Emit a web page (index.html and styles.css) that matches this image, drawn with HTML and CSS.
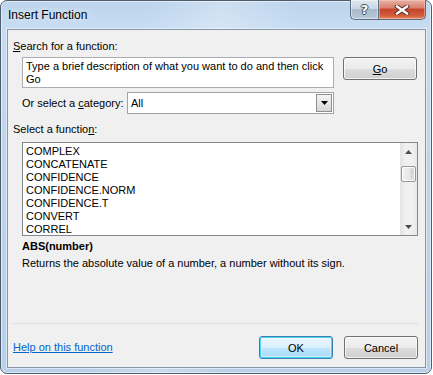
FILE: index.html
```html
<!DOCTYPE html>
<html>
<head>
<meta charset="utf-8">
<title>Insert Function</title>
<link rel="stylesheet" href="styles.css">
</head>
<body>
<div class="window">
  <div class="titlebar">
    <span class="title">Insert Function</span>
    <div class="caption-buttons">
      <div class="cap-btn cap-help"><span class="qmark">?</span></div>
      <div class="cap-btn cap-close">
        <svg width="16" height="10" viewBox="0 0 16 10">
          <path d="M3 1.5 L13 8.5 M13 1.5 L3 8.5" stroke="#5a2a22" stroke-width="4.2" stroke-linecap="square" fill="none"/>
          <path d="M3 1.5 L13 8.5 M13 1.5 L3 8.5" stroke="#ffffff" stroke-width="2.4" stroke-linecap="square" fill="none"/>
        </svg>
      </div>
    </div>
  </div>
  <div class="client">
    <div class="label label-search"><u>S</u>earch for a function:</div>
    <div class="search-row">
      <div class="textbox">Type a brief description of what you want to do and then click<br>Go</div>
      <button class="btn btn-go"><u>G</u>o</button>
    </div>
    <div class="category-row">
      <span class="label label-cat">Or select a <u>c</u>ategory:</span>
      <div class="select">
        <span class="select-value">All</span>
        <span class="select-drop">
          <svg width="7" height="4" viewBox="0 0 7 4"><path d="M0 0 H7 L3.5 4 Z" fill="#000"/></svg>
        </span>
      </div>
    </div>
    <div class="label label-fn">Select a functio<u>n</u>:</div>
    <div class="listbox">
      <div class="items">
        <div class="item">COMPLEX</div>
        <div class="item">CONCATENATE</div>
        <div class="item">CONFIDENCE</div>
        <div class="item">CONFIDENCE.NORM</div>
        <div class="item">CONFIDENCE.T</div>
        <div class="item">CONVERT</div>
        <div class="item">CORREL</div>
      </div>
      <div class="scrollbar">
        <div class="sb-arrow">
          <svg width="7" height="4" viewBox="0 0 7 4"><path d="M0 4 H7 L3.5 0 Z" fill="#4d4d4d"/></svg>
        </div>
        <div class="sb-track">
          <div class="sb-thumb"><span class="grip"></span></div>
        </div>
        <div class="sb-arrow">
          <svg width="7" height="4" viewBox="0 0 7 4"><path d="M0 0 H7 L3.5 4 Z" fill="#4d4d4d"/></svg>
        </div>
      </div>
    </div>
    <div class="signature">ABS(number)</div>
    <div class="desc">Returns the absolute value of a number, a number without its sign.</div>
    <div class="separator"></div>
    <div class="footer">
      <a class="help-link" href="#">Help on this function</a>
      <div class="actions">
        <button class="btn btn-default">OK</button>
        <button class="btn">Cancel</button>
      </div>
    </div>
  </div>
</div>
</body>
</html>
```

FILE: styles.css
```css
html, body {
  margin: 0;
  padding: 0;
  background: #ffffff;
}

body {
  font-family: "Liberation Sans", Arial, sans-serif;
  font-size: 11px;
  color: #000;
}

.window {
  box-sizing: border-box;
  width: 432px;
  height: 374px;
  border: 1px solid #4e5d6c;
  border-radius: 7px;
  background:
    linear-gradient(100deg, rgba(255,255,255,0) 30%, rgba(255,255,255,0.25) 45%, rgba(255,255,255,0) 60%),
    linear-gradient(to bottom, #bcd4ec 0px, #c6dcf2 25px, #bfd6ee 120px, #b7cfe8 374px);
  box-shadow: inset 0 0 0 1px rgba(255,255,255,0.55);
  display: flex;
  flex-direction: column;
  padding: 0 5px 5px 6px;
}

.titlebar {
  height: 28px;
  display: flex;
  align-items: flex-start;
  justify-content: space-between;
  flex: none;
}

.title {
  margin-top: 7px;
  margin-left: 1px;
  font-size: 12px;
  line-height: 15px;
  color: #000;
  text-shadow: 0 0 6px rgba(255,255,255,0.9);
}

.caption-buttons {
  display: flex;
  margin-top: -1px;
}

.cap-btn {
  box-sizing: border-box;
  height: 20px;
  border: 1px solid #5b6b7c;
  border-top: none;
  display: flex;
  align-items: center;
  justify-content: center;
}

.cap-help {
  width: 28px;
  border-right: none;
  border-radius: 0 0 0 5px;
  background: linear-gradient(to bottom, #dfe7ef 0%, #c9d6e3 45%, #a9bacb 50%, #b9c9d9 100%);
  box-shadow: inset 0 0 0 1px rgba(255,255,255,0.45);
}

.qmark {
  font-family: "DejaVu Sans", sans-serif;
  font-weight: bold;
  font-size: 13px;
  line-height: 14px;
  color: #fff;
  text-shadow: -1px 0 #3d4a57, 1px 0 #3d4a57, 0 -1px #3d4a57, 0 1px #3d4a57;
}

.cap-close {
  width: 48px;
  border-radius: 0 0 5px 0;
  background: linear-gradient(to bottom, #e8b2a6 0%, #d9826f 40%, #c5442c 50%, #d4603f 85%, #e8946e 100%);
  box-shadow: inset 0 0 0 1px rgba(255,210,200,0.45);
}

.client {
  flex: 1;
  box-sizing: border-box;
  background: #f0f0f0;
  border: 1px solid #8696a8;
  box-shadow: 0 0 0 1px rgba(255,255,255,0.5);
  display: flex;
  flex-direction: column;
  padding: 0 7px 7px 5px;
}

.label {
  line-height: 15px;
  white-space: nowrap;
}

.label-search {
  margin-top: 9px;
}

.search-row {
  display: flex;
  align-items: flex-start;
  margin-top: 3px;
  margin-left: 9px;
}

.textbox {
  box-sizing: border-box;
  width: 312px;
  height: 31px;
  background: #fff;
  border: 1px solid #abadb3;
  padding: 2px 3px;
  line-height: 13px;
  white-space: nowrap;
  overflow: hidden;
}

.btn {
  box-sizing: border-box;
  width: 74px;
  height: 23px;
  font-family: "Liberation Sans", Arial, sans-serif;
  font-size: 11px;
  color: #000;
  border: 1px solid #707070;
  border-radius: 3px;
  background: linear-gradient(to bottom, #f2f2f2 0%, #ebebeb 50%, #dddddd 51%, #cfcfcf 100%);
  box-shadow: inset 0 0 0 1px rgba(255,255,255,0.7);
  padding: 0;
  margin: 0;
}

.btn-go {
  margin-left: 9px;
}

.btn-default {
  border-color: #3c7fb1;
  box-shadow: inset 0 0 0 1px #48d4f8, inset 0 0 0 2px rgba(255,255,255,0.4);
  background: linear-gradient(to bottom, #eaf6fd 0%, #d9f0fc 50%, #bee6fd 51%, #a7d9f5 100%);
}

.category-row {
  display: flex;
  align-items: center;
  margin-top: 4px;
  margin-left: 9px;
}

.label-cat {
  width: 105px;
}

.select {
  box-sizing: border-box;
  width: 207px;
  height: 22px;
  background: #fff;
  border: 1px solid #a3a3a3;
  display: flex;
  align-items: center;
  justify-content: space-between;
  padding: 0 1px 0 3px;
}

.select-drop {
  box-sizing: border-box;
  width: 16px;
  height: 18px;
  border: 1px solid #8f8f8f;
  background: linear-gradient(to bottom, #f4f4f4 0%, #e6e6e6 50%, #d7d7d7 100%);
  display: flex;
  align-items: center;
  justify-content: center;
}

.label-fn {
  margin-top: 8px;
}

.listbox {
  box-sizing: border-box;
  width: 396px;
  height: 94px;
  margin-top: 5px;
  margin-left: 9px;
  background: #fff;
  border: 1px solid #828790;
  display: flex;
}

.items {
  flex: 1;
  padding: 2px 0 0 3px;
  overflow: hidden;
}

.item {
  line-height: 13px;
  height: 13px;
  white-space: nowrap;
}

.scrollbar {
  width: 17px;
  background: linear-gradient(to right, #e3e3e3 0%, #f0f0f0 30%, #f0f0f0 70%, #e8e8e8 100%);
  display: flex;
  flex-direction: column;
}

.sb-arrow {
  height: 17px;
  display: flex;
  align-items: center;
  justify-content: center;
  flex: none;
}

.sb-track {
  flex: 1;
}

.sb-thumb {
  box-sizing: border-box;
  height: 16px;
  margin: 6px 1px 0 1px;
  border: 1px solid #979797;
  border-radius: 2px;
  background: linear-gradient(to right, #f3f3f3 0%, #e8e8e8 50%, #d6d6d6 100%);
  box-shadow: inset 0 0 0 1px rgba(255,255,255,0.8);
  display: flex;
  justify-content: flex-end;
  padding: 3px 3px 0 0;
}

.grip {
  width: 1px;
  height: 8px;
  background: repeating-linear-gradient(to bottom, #b5b5b5 0 1px, transparent 1px 2px);
}

.signature {
  margin-top: 3px;
  margin-left: 9px;
  font-weight: bold;
  line-height: 15px;
}

.desc {
  margin-top: 2px;
  margin-left: 9px;
  line-height: 15px;
  white-space: nowrap;
}

.separator {
  margin-top: auto;
  height: 1px;
  background: #d5dfe5;
}

.footer {
  display: flex;
  align-items: center;
  justify-content: space-between;
  margin-top: 12px;
  height: 23px;
  margin-bottom: 1px;
}

.help-link {
  color: #0066cc;
  text-decoration: underline;
  line-height: 15px;
}

.actions {
  display: flex;
  gap: 11px;
}
```
